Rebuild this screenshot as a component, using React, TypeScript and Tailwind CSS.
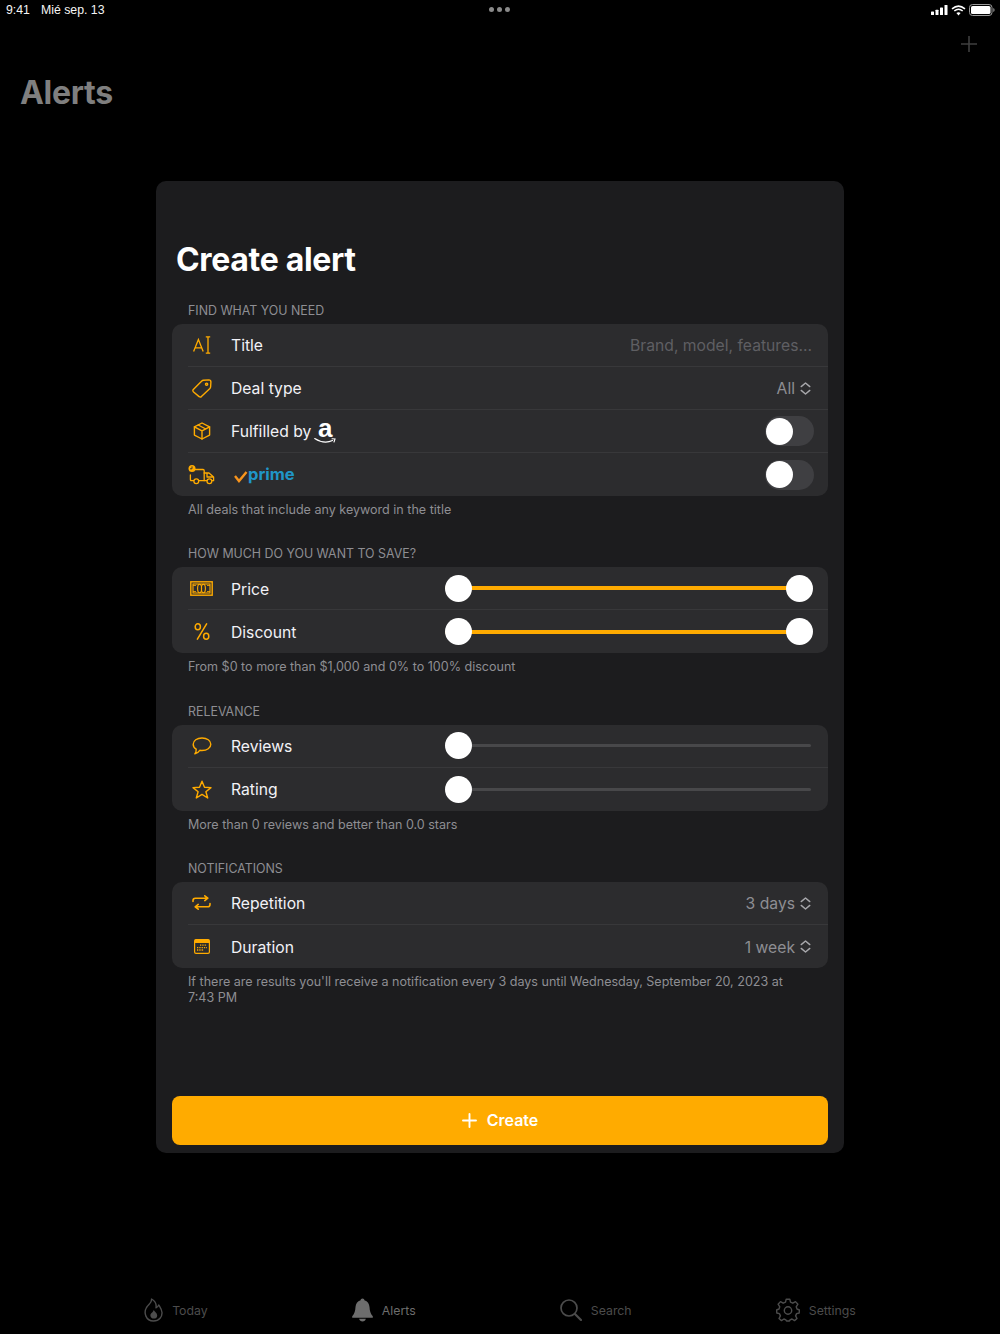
import React from "react";

const O = "#ffab00";

function Icon({ children, w = 24, h = 24 }: { children: React.ReactNode; w?: number; h?: number }) {
  return (
    <svg width={w} height={h} viewBox={`0 0 ${w} ${h}`} fill="none" stroke={O} strokeWidth={1.4} strokeLinecap="round" strokeLinejoin="round">
      {children}
    </svg>
  );
}

const TitleIcon = () => (
  <svg width="18" height="18" viewBox="0 0 18 18" fill="none" stroke={O} strokeWidth="1.3">
    <path d="M0.6 15.5 L5.4 3.5 L10.2 15.5 M2.1 11.8 H8.7" />
    <path d="M12.8 0.8 H17.2 M15 0.8 V17.2 M12.8 17.2 H17.2" />
  </svg>
);
const TagIcon = () => (
  <svg width="20" height="19" viewBox="0 0 20 19" fill="none" stroke={O} strokeWidth="1.4" strokeLinejoin="round">
    <path d="M1.3 10.4 L9.8 2 Q10.5 1.3 11.4 1.2 L16.8 0.9 Q18.9 0.9 18.9 3 L18.6 8 Q18.5 8.9 17.9 9.5 L9.4 17.6 Q8.2 18.6 7.1 17.6 L1.3 12.7 Q0.4 11.5 1.3 10.4 Z" />
    <circle cx="14.6" cy="5.2" r="1.1" />
  </svg>
);
const BoxIcon = () => (
  <Icon w={18} h={18}>
    <path d="M9 1 L16.6 4.9 V13.1 L9 17 L1.4 13.1 V4.9 Z" />
    <path d="M1.4 4.9 L9 8.9 L16.6 4.9 M9 8.9 V17 M5.2 3 L12.8 7" />
  </Icon>
);
const TruckIcon = () => (
  <svg width="27" height="20" viewBox="0 0 27 20" fill="none" stroke={O} strokeWidth="1.3" strokeLinecap="round" strokeLinejoin="round">
    <path d="M6 4.5 H15 Q16.2 4.5 16.2 5.7 V15.7 H11 M5.6 15.7 H3.5 Q2.4 15.7 2.4 14.6 V10" />
    <path d="M16.2 8 H21 L25.6 12 V15.7 H24 M18.8 15.7 H16.2 M19 8 V12 H25.4" />
    <circle cx="8.3" cy="16.2" r="2.4" />
    <circle cx="21.4" cy="16.2" r="2.4" />
    <circle cx="4" cy="3.6" r="3.5" fill={O} stroke="none" />
    <path d="M4 1.8 V3.8 H2.4" stroke="#2c2c2e" strokeWidth="0.9" />
  </svg>
);
const MoneyIcon = () => (
  <svg width="23" height="15" viewBox="0 0 23 15" fill="none" stroke={O} strokeWidth="1.1">
    <rect x="0.8" y="0.8" width="21.4" height="13.4" strokeWidth="1.4" />
    <rect x="3" y="3" width="17" height="9" />
    <ellipse cx="9.6" cy="7.5" rx="2" ry="4.2" />
    <ellipse cx="13.4" cy="7.5" rx="2" ry="4.2" />
    <path d="M3 4.5 H6 M3 10.5 H6 M17 4.5 H20 M17 10.5 H20" strokeWidth="0.8" />
  </svg>
);
const PercentIcon = () => (
  <svg width="16" height="17" viewBox="0 0 16 17" fill="none" stroke={O} strokeWidth="1.5">
    <path d="M12.6 0.8 L3.4 16.2" strokeLinecap="round" />
    <ellipse cx="3.8" cy="3.8" rx="2.6" ry="3" />
    <ellipse cx="12.2" cy="13.2" rx="2.6" ry="3" />
  </svg>
);
const BubbleIcon = () => (
  <Icon w={20} h={18}>
    <path d="M10 1 C15 1 18.8 3.6 18.8 7.2 C18.8 10.8 15 13.5 10 13.5 C9.2 13.5 8.5 13.4 7.8 13.3 C6.6 15 4.8 16.5 2.9 16.8 C3.9 15.6 4.3 14.2 4.2 12.1 C2.3 11 1.2 9.2 1.2 7.2 C1.2 3.6 5 1 10 1 Z" />
  </Icon>
);
const StarIcon = () => (
  <Icon w={20} h={19}>
    <path d="M10 1.2 L12.5 7.3 L19 7.6 L13.9 11.7 L15.7 18 L10 14.4 L4.3 18 L6.1 11.7 L1 7.6 L7.5 7.3 Z" />
  </Icon>
);
const RepeatIcon = () => (
  <svg width="19" height="15" viewBox="0 0 19 15" fill="none" stroke={O} strokeWidth="1.6" strokeLinecap="round" strokeLinejoin="round">
    <path d="M1 6.5 V5.5 Q1 3.2 3.3 3.2 H15.5 M12.8 0.8 L15.8 3.2 L12.8 5.6" />
    <path d="M18 8.5 V9.5 Q18 11.8 15.7 11.8 H3.5 M6.2 9.4 L3.2 11.8 L6.2 14.2" />
  </svg>
);
const CalendarIcon = () => (
  <svg width="16" height="15" viewBox="0 0 16 15" fill="none">
    <rect x="0.6" y="0.6" width="14.8" height="13.8" rx="1.4" stroke={O} strokeWidth="1.2" />
    <path d="M0.6 2 Q0.6 0.6 2 0.6 H14 Q15.4 0.6 15.4 2 V4 H0.6 Z" fill={O} />
    <path d="M6 6.2 H13 M3 8.6 H13 M3 11 H10" stroke={O} strokeWidth="1.3" strokeDasharray="1.3 1" />
  </svg>
);

const Updown = () => (
  <svg width="11" height="13" viewBox="0 0 11 13" fill="none" stroke="#a8a8ac" strokeWidth="1.4" strokeLinecap="round" strokeLinejoin="round">
    <path d="M1.2 4.6 L5.5 1 L9.8 4.6 M1.2 8.4 L5.5 12 L9.8 8.4" />
  </svg>
);

const Toggle = () => (
  <div className="mr-[-2px] flex h-[30px] w-[49px] items-center rounded-full bg-[#3f3f42] pl-[1px]">
    <div className="h-[27px] w-[27px] rounded-full bg-white" />
  </div>
);

const Row = ({ icon, last, children }: { icon: React.ReactNode; last?: boolean; children: React.ReactNode }) => (
  <div className={`ml-4 flex h-[43px] items-center pr-4 ${last ? "" : "border-b border-[#38383a]"}`}>
    <div className="flex w-[27px] justify-center">{icon}</div>
    <div className="ml-[16px] flex min-w-0 flex-1 items-center justify-between text-[15.7px] text-[#f2f2f7]">{children}</div>
  </div>
);

const Label = ({ children, dim }: { children: React.ReactNode; dim?: boolean }) => (
  <span className={`flex items-center pt-[2px] ${dim ? "text-[#5f5f63]" : ""}`}>{children}</span>
);

const Slider = ({ on }: { on?: boolean }) => (
  <div className="relative ml-auto mr-[-1px] flex h-[28px] w-[368px] items-center">
    <div className={`w-full rounded-full ${on ? "mr-[13px] h-[4px] bg-[#ffab00]" : "mr-[2px] h-[3px] bg-[#48484a]"}`} />
    <div className="absolute left-0 h-[27px] w-[27px] rounded-full bg-white" />
    {on && <div className="absolute right-0 h-[27px] w-[27px] rounded-full bg-white" />}
  </div>
);

const Section = ({ label, note, children }: { label: string; note: string; children: React.ReactNode }) => (
  <section className="mb-[25.33px]">
    <div className="pb-[4px] pl-4 pt-[1px] text-[12.4px] leading-[18px] text-[#8e8e93]">{label}</div>
    <div className="rounded-[10px] bg-[#2c2c2e]">{children}</div>
    <div className="pb-[1px] pl-4 pr-8 pt-[6px] text-[12.55px] leading-[16px] text-[#8e8e93]">{note}</div>
  </section>
);

const Value = ({ children }: { children: string }) => (
  <span className="mr-[1px] flex items-center gap-[5px] text-[#8e8e93]">
    <span className="pt-[2px]">{children}</span>
    <span className="pt-[1px]">
      <Updown />
    </span>
  </span>
);

const Tab = ({ icon, label, active }: { icon: React.ReactNode; label: string; active?: boolean }) => (
  <div className={`flex items-center gap-[9px] text-[12.3px] ${active ? "text-[#6d6d6d]" : "text-[#4c4c4c]"}`}>
    {icon}
    <span className="pt-[2px]">{label}</span>
  </div>
);

export default function App() {
  return (
    <div className="relative flex h-[1334px] w-[1000px] flex-col overflow-hidden bg-black font-['Inter','Liberation_Sans',sans-serif]">
      {/* status bar */}
      <div className="relative flex h-[20px] items-center justify-between pl-[6px] pr-[5px] text-[#f5f5f5]">
        <div className="flex gap-[11px] font-['Liberation_Sans',sans-serif] text-[12.3px]">
          <span>9:41</span>
          <span>Mié sep. 13</span>
        </div>
        <div className="absolute left-[489px] top-[7px] flex gap-[3px]">
          <span className="h-[5px] w-[5px] rounded-full bg-[#8a8a8a]" />
          <span className="h-[5px] w-[5px] rounded-full bg-[#8a8a8a]" />
          <span className="h-[5px] w-[5px] rounded-full bg-[#8a8a8a]" />
        </div>
        <div className="flex items-center gap-[3px]">
          <svg width="17" height="10" viewBox="0 0 17 10" fill="white">
            <rect x="0" y="6.5" width="3" height="3.5" rx="0.6" />
            <rect x="4.5" y="4.7" width="3" height="5.3" rx="0.6" />
            <rect x="9" y="2.5" width="3" height="7.5" rx="0.6" />
            <rect x="13.5" y="0" width="3" height="10" rx="0.6" />
          </svg>
          <svg width="15" height="11" viewBox="0 0 15 11" fill="none" stroke="white" strokeWidth="1.5">
            <path d="M1 3.8 Q7.5 -1.6 14 3.8" />
            <path d="M3.3 6 Q7.5 2.4 11.7 6" />
            <path d="M7.5 10.4 L5.4 8.1 Q7.5 6.5 9.6 8.1 Z" fill="white" stroke="none" />
          </svg>
          <svg width="26" height="12" viewBox="0 0 26 12" fill="none">
            <rect x="0.5" y="0.5" width="22.5" height="11" rx="3" stroke="#9a9a9a" />
            <rect x="2" y="2" width="19.5" height="8" rx="1.6" fill="white" />
            <path d="M24.3 4 Q25.6 4.6 25.6 6 Q25.6 7.4 24.3 8 Z" fill="#9a9a9a" />
          </svg>
        </div>
      </div>

      {/* nav */}
      <div className="flex justify-end pr-[22px] pt-[15px]">
        <svg width="18" height="18" viewBox="0 0 18 18" stroke="#3f3f3f" strokeWidth="1.6">
          <path d="M9 1 V17 M1 9 H17" />
        </svg>
      </div>
      <h1 className="pl-5 pt-[19px] text-[32px] font-bold leading-[42px] tracking-[-0.01em] text-[#7f7f7f]">Alerts</h1>

      {/* tab bar */}
      <div className="mt-auto flex h-[49px] items-center justify-evenly pt-[1px]">
        <Tab
          label="Today"
          icon={
            <svg width="19" height="24" viewBox="0 0 19 24" fill="none" stroke="#4c4c4c" strokeWidth="1.4" strokeLinejoin="round">
              <path d="M7.5 1 C8.2 4.5 4.8 6 2.5 9.5 C-0.5 14.5 1.6 23 9.5 23 C15.5 23 18.2 18.5 18 14.5 C17.8 11 15.5 8.5 14.8 7 C14 8.5 13 9.5 12 9.8 C12.6 6.5 11 3 7.5 1 Z" />
              <path d="M9.7 12 C10.6 14 13.2 15 13.2 17.4 C13.2 19.5 11.6 20.6 9.8 20.6 C8 20.6 6.4 19.4 6.4 17.4 C6.4 15 9.2 14.5 9.7 12 Z" fill="#4c4c4c" stroke="none" />
            </svg>
          }
        />
        <Tab
          active
          label="Alerts"
          icon={
            <svg width="21" height="24" viewBox="0 0 21 24" fill="#6d6d6d">
              <path d="M10.5 0.5 C11.6 0.5 12.4 1.3 12.4 2.3 C15.7 3.1 17.2 5.7 17.5 9 C17.8 12.8 18.3 15.6 20.8 18.2 V19.8 H0.2 V18.2 C2.7 15.6 3.2 12.8 3.5 9 C3.8 5.7 5.3 3.1 8.6 2.3 C8.6 1.3 9.4 0.5 10.5 0.5 Z" />
              <path d="M7.2 20.8 H13.8 C13.5 22.5 12.2 23.5 10.5 23.5 C8.8 23.5 7.5 22.5 7.2 20.8 Z" />
            </svg>
          }
        />
        <Tab
          label="Search"
          icon={
            <svg width="22" height="22" viewBox="0 0 22 22" fill="none" stroke="#4c4c4c" strokeWidth="1.7" strokeLinecap="round">
              <circle cx="9" cy="9" r="8" />
              <path d="M15 15 L21 21" strokeWidth="2.2" />
            </svg>
          }
        />
        <Tab
          label="Settings"
          icon={
            <svg width="24" height="24" viewBox="0 0 24 24" fill="none" stroke="#4c4c4c" strokeWidth="1.4" strokeLinejoin="round">
              <path d="M10.2 1.2 H13.8 L14.5 4.2 L16.8 5.2 L19.5 3.6 L21.9 6.2 L20.2 8.8 L21 11 L23.4 12 L23.2 15 L20.6 15.6 L19.6 17.9 L21 20.5 L18.5 22.6 L16 21 L14 21.9 L13.5 23 H10.5 L9.9 21.9 L7.9 21 L5.5 22.6 L3 20.5 L4.4 17.9 L3.4 15.6 L0.8 15 L0.6 12 L3 11 L3.8 8.8 L2.1 6.2 L4.5 3.6 L7.2 5.2 L9.5 4.2 Z" />
              <circle cx="12" cy="12.5" r="3.7" />
            </svg>
          }
        />
      </div>

      {/* modal */}
      <div className="absolute left-[156px] top-[181px] flex h-[972px] w-[688px] flex-col rounded-[10px] bg-[#1c1c1e] px-4 pb-[8px]">
        <h2 className="pl-[4px] pt-[59px] text-[32px] font-bold leading-[40px] tracking-[-0.01em] text-white">Create alert</h2>
        <div className="h-[21px]" />

        <Section label="FIND WHAT YOU NEED" note="All deals that include any keyword in the title">
          <Row icon={<TitleIcon />}>
            <Label>Title</Label>
            <Label dim>Brand, model, features...</Label>
          </Row>
          <Row icon={<TagIcon />}>
            <Label>Deal type</Label>
            <Value>All</Value>
          </Row>
          <Row icon={<BoxIcon />}>
            <span className="flex items-center gap-[3px]">
              <Label>Fulfilled by</Label>
              <span className="relative flex h-[27px] w-[22px] justify-center">
                <span className="font-['Liberation_Sans',sans-serif] text-[26px] font-bold leading-[20px] text-white">a</span>
                <svg className="absolute bottom-0 left-0" width="22" height="8" viewBox="0 0 22 8" fill="none" stroke="white" strokeWidth="1.1" strokeLinecap="round">
                  <path d="M0.7 1.5 Q10 7.5 18.5 3.6" />
                  <path d="M18 1.7 L21 2 L20 5" />
                </svg>
              </span>
            </span>
            <Toggle />
          </Row>
          <Row last icon={<TruckIcon />}>
            <span className="flex items-center">
              <svg width="14" height="12" viewBox="0 0 14 12" fill="none" stroke="#f7941d" strokeWidth="2.4" className="ml-[3px] mt-[4px]">
                <path d="M1 5 L5 10 L12.5 1" />
              </svg>
              <span className="text-[16.5px] font-bold text-[#2096c8]">prime</span>
            </span>
            <Toggle />
          </Row>
        </Section>

        <Section label="HOW MUCH DO YOU WANT TO SAVE?" note="From $0 to more than $1,000 and 0% to 100% discount">
          <Row icon={<MoneyIcon />}>
            <Label>Price</Label>
            <Slider on />
          </Row>
          <Row last icon={<PercentIcon />}>
            <Label>Discount</Label>
            <Slider on />
          </Row>
        </Section>

        <Section label="RELEVANCE" note="More than 0 reviews and better than 0.0 stars">
          <Row icon={<BubbleIcon />}>
            <Label>Reviews</Label>
            <Slider />
          </Row>
          <Row last icon={<StarIcon />}>
            <Label>Rating</Label>
            <Slider />
          </Row>
        </Section>

        <Section
          label="NOTIFICATIONS"
          note="If there are results you'll receive a notification every 3 days until Wednesday, September 20, 2023 at 7:43 PM"
        >
          <Row icon={<RepeatIcon />}>
            <Label>Repetition</Label>
            <Value>3 days</Value>
          </Row>
          <Row last icon={<CalendarIcon />}>
            <Label>Duration</Label>
            <Value>1 week</Value>
          </Row>
        </Section>

        <button className="mt-auto flex h-[49px] w-full items-center justify-center gap-[10px] rounded-[8px] bg-[#ffab00] pb-[1px] text-[16px] font-semibold text-white">
          <svg width="15" height="15" viewBox="0 0 15 15" stroke="white" strokeWidth="1.9" strokeLinecap="round">
            <path d="M7.5 1 V14 M1 7.5 H14" />
          </svg>
          Create
        </button>
      </div>
    </div>
  );
}
